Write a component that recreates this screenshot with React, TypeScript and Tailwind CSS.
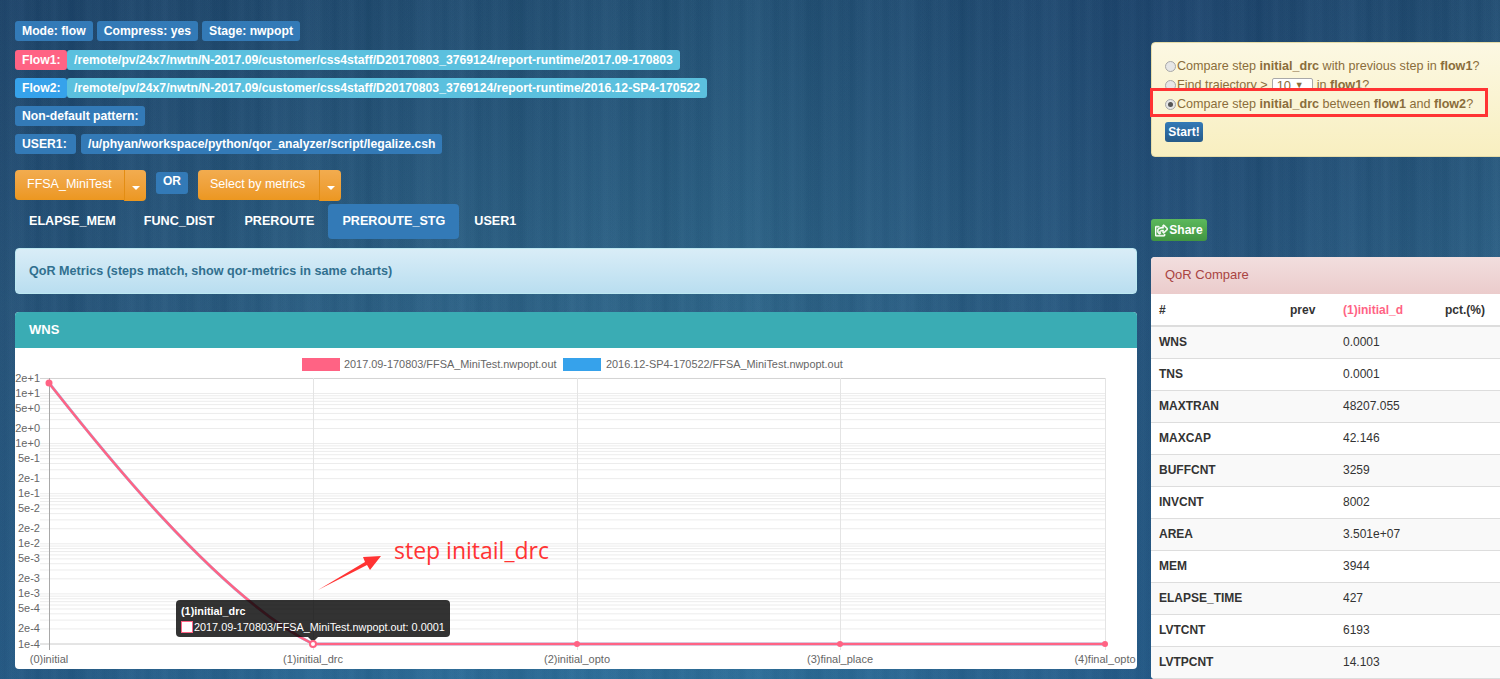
import React from 'react';
import { FaRegShareSquare } from 'react-icons/fa';

const PINK = '#ff6384';

// y axis is log scale, one decade is about 50px
const yOf = (v: number) => 644 - 50.1 * Math.log10(v / 1e-4);

const Y_LABELS: [string, number][] = [
    ['2e+1', 20], ['1e+1', 10], ['5e+0', 5], ['2e+0', 2], ['1e+0', 1], ['5e-1', 0.5],
    ['2e-1', 0.2], ['1e-1', 0.1], ['5e-2', 0.05], ['2e-2', 0.02], ['1e-2', 0.01], ['5e-3', 0.005],
    ['2e-3', 0.002], ['1e-3', 0.001], ['5e-4', 0.0005], ['2e-4', 0.0002], ['1e-4', 0.0001],
];

const gridValues: number[] = [];
for (let e = -4; e <= 1; e++) {
    for (let m = 1; m <= 9; m++) {
        const v = m * Math.pow(10, e);
        if (v <= 20) gridValues.push(v);
    }
}

const X_LABELS: [string, number][] = [
    ['(0)initial', 49], ['(1)initial_drc', 313], ['(2)initial_opto', 577], ['(3)final_place', 840], ['(4)final_opto', 1105],
];

const ROWS: [string, string][] = [
    ['WNS', '0.0001'], ['TNS', '0.0001'], ['MAXTRAN', '48207.055'], ['MAXCAP', '42.146'],
    ['BUFFCNT', '3259'], ['INVCNT', '8002'], ['AREA', '3.501e+07'], ['MEM', '3944'],
    ['ELAPSE_TIME', '427'], ['LVTCNT', '6193'], ['LVTPCNT', '14.103'],
];

const Badge: React.FC<{ children: React.ReactNode; className?: string }> = ({ children, className = 'bg-[#337ab7]' }) => (
    <span className={`inline-flex h-5 items-center whitespace-nowrap rounded-[3px] px-[7px] text-[12.2px] font-bold text-white ${className}`}>
        {children}
    </span>
);

const SplitButton: React.FC<{ label: string; width: string }> = ({ label, width }) => (
    <div className="flex h-[30px] items-start">
        <div className={`flex h-[30px] items-center rounded-l-[4px] bg-gradient-to-b from-[#f2ac4f] to-[#ec971f] pb-px pl-3 text-[12.5px] text-white ${width}`}>
            {label}
        </div>
        <div className="flex h-[31px] w-[22px] items-center justify-center rounded-r-[4px] border-l border-[#e38d13] bg-gradient-to-b from-[#f2ac4f] to-[#ec971f]">
            <span className="mt-1 h-0 w-0 border-x-[4px] border-t-[4px] border-x-transparent border-t-white" />
        </div>
    </div>
);

const Radio: React.FC<{ checked?: boolean }> = ({ checked }) => (
    <span className="mr-px flex h-[11px] w-[11px] shrink-0 items-center justify-center rounded-full border border-[#a8a8a8] bg-[#e6e6e6]">
        {checked && <span className="h-[5px] w-[5px] rounded-full bg-[#555]" />}
    </span>
);

const Chart: React.FC = () => (
    <svg viewBox="15 348 1122 321" className="block h-[321px] w-[1122px]">
        {/* legend */}
        <rect x="302" y="358" width="38" height="13" fill={PINK} />
        <text x="344" y="368" fontSize="10.9" fill="#666">2017.09-170803/FFSA_MiniTest.nwpopt.out</text>
        <rect x="563" y="358" width="38" height="13" fill="#36a2eb" />
        <text x="606" y="368" fontSize="10.9" fill="#666">2016.12-SP4-170522/FFSA_MiniTest.nwpopt.out</text>

        {/* grid */}
        {gridValues.map(v => (
            <line key={v} x1="40" x2="1105" y1={yOf(v)} y2={yOf(v)} stroke="#ececec" strokeWidth="1" />
        ))}
        <line x1="40" x2="1105" y1="378.5" y2="378.5" stroke="#d4d4d4" />
        <line x1="40" x2="1105" y1="644" y2="644" stroke="#d4d4d4" />
        <line x1="49.5" x2="49.5" y1="378" y2="650" stroke="#a8a8a8" />
        {[313, 577, 840, 1105].map(x => (
            <line key={x} x1={x + 0.5} x2={x + 0.5} y1="378" y2="650" stroke="#e4e4e4" />
        ))}

        {Y_LABELS.map(([label, v]) => (
            <text key={label} x="40" y={yOf(v) + 3.5} textAnchor="end" fontSize="11" fill="#666">{label}</text>
        ))}
        {X_LABELS.map(([label, x]) => (
            <text key={label} x={x} y="663" textAnchor="middle" fontSize="11" fill="#666">{label}</text>
        ))}

        {/* second series sits under the first one */}
        <path d="M49 383 C90 435 215 595 313 644 L1105 644" fill="none" stroke="#36a2eb" strokeOpacity="0.5" strokeWidth="3" />
        <path d="M49 383 C90 435 215 595 313 644 L1105 644" fill="none" stroke={PINK} strokeWidth="2.5" />
        <circle cx="49" cy="383" r="3.5" fill={PINK} />
        <circle cx="577" cy="644" r="3" fill={PINK} />
        <circle cx="840" cy="644" r="3" fill={PINK} />
        <circle cx="1105" cy="644" r="3" fill={PINK} />

        {/* hand drawn arrow */}
        <polygon points="318,590 365,562 363,557 381,556 370,570 367,565" fill="#f33" />
    </svg>
);

export default function App() {
    return (
        <div className="relative flex h-[679px] w-[1500px] overflow-hidden bg-[#275a82] bg-[repeating-linear-gradient(90deg,rgba(255,255,255,0.012)_0px,rgba(0,0,0,0.012)_5px,rgba(255,255,255,0.012)_11px),repeating-linear-gradient(90deg,rgba(0,0,0,0.025)_0px,rgba(255,255,255,0.02)_17px,rgba(0,0,0,0.025)_37px),repeating-linear-gradient(90deg,rgba(255,255,255,0.015)_0px,rgba(0,0,0,0.03)_71px,rgba(255,255,255,0.015)_149px),linear-gradient(90deg,rgba(20,50,90,0.35)_0%,rgba(30,60,90,0.05)_25%,rgba(50,120,150,0.12)_50%,rgba(20,50,100,0.3)_78%,rgba(30,70,110,0.05)_100%),linear-gradient(180deg,#1f4c72_0%,#2b6288_45%,#2a6c9a_100%)] font-['Liberation_Sans',Arial,sans-serif]">
            {/* left column */}
            <div className="ml-[15px] w-[1122px] shrink-0 pt-[21px]">
                <div className="flex gap-1">
                    <Badge>Mode: flow</Badge>
                    <Badge>Compress: yes</Badge>
                    <Badge>Stage: nwpopt</Badge>
                </div>
                <div className="mt-[9px] flex">
                    <Badge className="w-[52px] bg-[#ff6384]">Flow1:</Badge>
                    <Badge className="bg-[#5bc0de]">/remote/pv/24x7/nwtn/N-2017.09/customer/css4staff/D20170803_3769124/report-runtime/2017.09-170803</Badge>
                </div>
                <div className="mt-2 flex">
                    <Badge className="w-[52px] bg-[#36a2eb]">Flow2:</Badge>
                    <Badge className="bg-[#5bc0de]">/remote/pv/24x7/nwtn/N-2017.09/customer/css4staff/D20170803_3769124/report-runtime/2016.12-SP4-170522</Badge>
                </div>
                <div className="mt-2 flex">
                    <Badge>Non-default pattern:</Badge>
                </div>
                <div className="mt-2 flex gap-[5px]">
                    <Badge className="w-[61px] bg-[#337ab7]">USER1:</Badge>
                    <Badge>/u/phyan/workspace/python/qor_analyzer/script/legalize.csh</Badge>
                </div>

                <div className="mt-4 flex items-start">
                    <SplitButton label="FFSA_MiniTest" width="w-[109px]" />
                    <span className="ml-[10px] mt-0.5 flex h-[22px] w-8 items-center justify-center rounded-[3px] bg-[#337ab7] pb-1 text-xs font-bold text-white">OR</span>
                    <div className="ml-[10px]">
                        <SplitButton label="Select by metrics" width="w-[121px]" />
                    </div>
                </div>

                <div className="mt-1 flex h-[35px] items-center text-[12.6px] font-bold text-white">
                    <span className="px-[14px]">ELAPSE_MEM</span>
                    <span className="px-[14px]">FUNC_DIST</span>
                    <span className="ml-0.5 px-[14px]">PREROUTE</span>
                    <span className="flex h-[35px] items-center rounded-[4px] bg-[#337ab7] px-[14px]">PREROUTE_STG</span>
                    <span className="px-[15px]">USER1</span>
                </div>

                <div className="mt-[9px] flex h-[46px] items-center rounded-[4px] border border-[#bce8f1] bg-gradient-to-b from-[#d9edf7] to-[#b9def0] px-[13px] text-[12.6px] font-bold text-[#31708f]">
                    QoR Metrics (steps match, show qor-metrics in same charts)
                </div>

                <div className="relative mt-[18px] overflow-hidden rounded-[4px] bg-white">
                    <div className="flex h-9 items-center bg-[#3aacb4] px-[14px] text-[13px] font-bold text-white">WNS</div>
                    <Chart />
                    <span className="absolute left-[379px] top-[221px] whitespace-nowrap font-['Open_Sans',sans-serif] text-[23px] text-[#f33]">step initail_drc</span>
                    <div className="absolute left-[161px] top-[288px] flex h-[37px] w-[274px] flex-col justify-center rounded-[4px] bg-black/80 px-[5px] text-[10.85px] leading-[16px] text-white">
                        <span className="font-bold">(1)initial_drc</span>
                        <span className="flex items-center whitespace-nowrap">
                            <span className="mr-px h-3 w-3 shrink-0 border border-[#ff6384] bg-white" />
                            2017.09-170803/FFSA_MiniTest.nwpopt.out: 0.0001
                        </span>
                    </div>
                    <span className="absolute left-[293px] top-[325px] h-0 w-0 border-x-[5px] border-t-[5px] border-x-transparent border-t-black/80" />
                    <span className="absolute left-[294px] top-[328px] h-2 w-2 rounded-full border-2 border-[#ff6384] bg-white" />
                </div>
            </div>

            {/* right column */}
            <div className="relative ml-[14px] w-[380px] shrink-0 pt-[42px]">
                <div className="h-[115px] rounded-[4px] border border-[#e6dca8] bg-gradient-to-b from-[#fcf8e3] to-[#f8efc0] pl-[13px] pt-[14px] text-[12.6px] leading-[19px] text-[#8a6d3b]">
                    <div className="flex h-[19px] items-center whitespace-nowrap">
                        <Radio />
                        <span>Compare step <b>initial_drc</b> with previous step in <b>flow1</b>?</span>
                    </div>
                    <div className="flex h-[19px] items-center whitespace-nowrap">
                        <Radio />
                        <span>Find trajectory &gt;</span>
                        <span className="mx-1 flex h-[15px] w-[41px] items-center justify-between rounded-[2px] border border-[#a9a9a9] bg-white pl-1 pr-2 text-[13px]">
                            10<span className="text-[9px]">▼</span>
                        </span>
                        <span>in <b>flow1</b>?</span>
                    </div>
                    <div className="relative z-10 flex h-[19px] items-center whitespace-nowrap">
                        <Radio checked />
                        <span>Compare step <b>initial_drc</b> between <b>flow1</b> and <b>flow2</b>?</span>
                    </div>
                    <button className="mt-2 flex h-5 w-[38px] items-center justify-center rounded-[3px] bg-gradient-to-b from-[#337ab7] to-[#265a88] text-xs font-bold text-white">
                        Start!
                    </button>
                </div>
                {/* red box pasted on the screenshot */}
                <div className="absolute left-[-1px] top-[88px] h-[29px] w-[338px] border-[3px] border-[#f33] bg-[#fbf5d6]" />

                <button className="mt-[62px] flex h-[22px] w-14 items-center justify-center gap-px rounded-[3px] bg-gradient-to-b from-[#5cb85c] to-[#419641] text-xs font-bold text-white">
                    <FaRegShareSquare size={13} stroke="currentColor" strokeWidth={24} />
                    Share
                </button>

                <div className="mt-4 h-[422px] overflow-hidden rounded-[4px] bg-white">
                    <div className="flex h-[37px] items-center bg-gradient-to-b from-[#f2dede] to-[#ebcccc] px-[14px] pb-0.5 text-[13px] text-[#a94442]">QoR Compare</div>
                    <table className="w-full table-fixed border-collapse text-xs text-[#333]">
                        <colgroup>
                            <col className="w-[131px]" />
                            <col className="w-[53px]" />
                            <col className="w-[102px]" />
                            <col />
                        </colgroup>
                        <thead>
                            <tr className="h-[32px] border-b-2 border-[#ddd] text-left">
                                <th className="px-2 font-bold">#</th>
                                <th className="px-2 font-bold">prev</th>
                                <th className="whitespace-nowrap px-2 font-bold text-[#ff6384]">(1)initial_d</th>
                                <th className="px-2 font-bold">pct.(%)</th>
                            </tr>
                        </thead>
                        <tbody>
                            {ROWS.map(([name, value], i) => (
                                <tr key={name} className={`h-[32px] border-b border-[#ddd] ${i % 2 === 0 ? 'bg-[#f9f9f9]' : 'bg-white'}`}>
                                    <td className="px-2 font-bold">{name}</td>
                                    <td className="px-2" />
                                    <td className="px-2">{value}</td>
                                    <td className="px-2" />
                                </tr>
                            ))}
                        </tbody>
                    </table>
                </div>
            </div>
        </div>
    );
}
